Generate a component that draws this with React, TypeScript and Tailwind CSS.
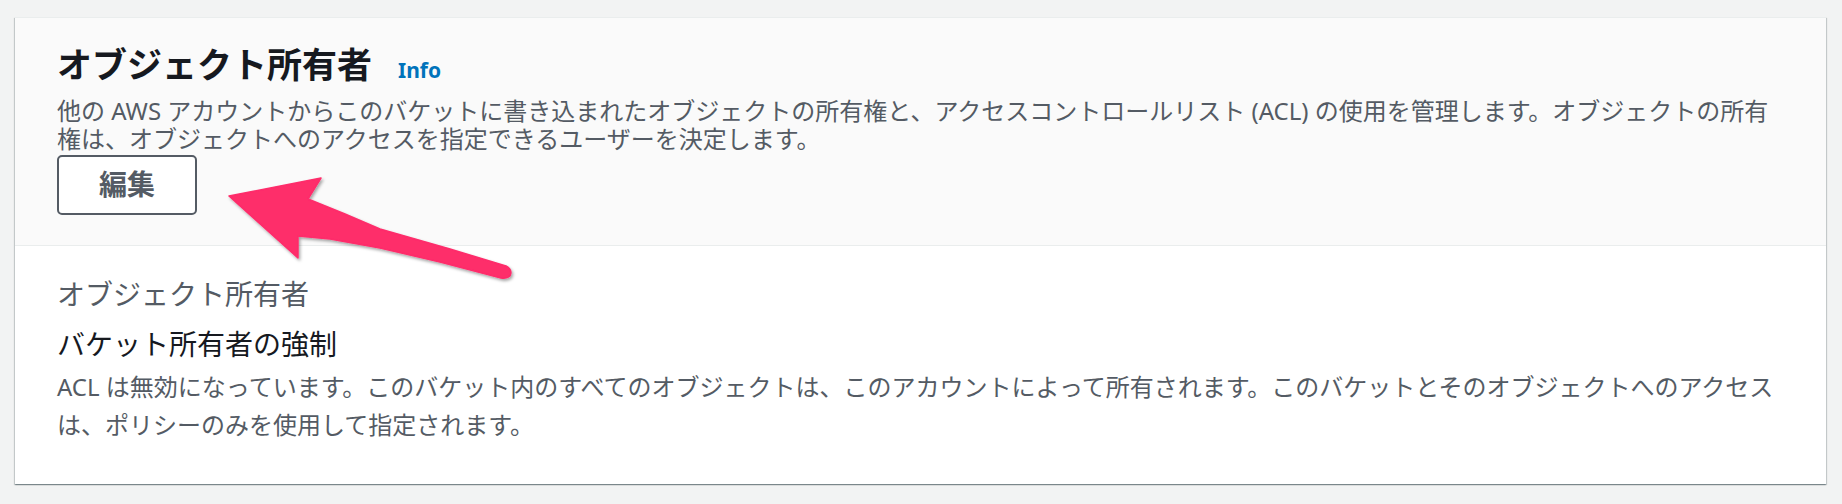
const font = "font-['Noto_Sans','Noto_Sans_CJK_JP',sans-serif]";

function Arrow() {
  return (
    <svg
      className="absolute left-0 top-0 pointer-events-none"
      width="1842"
      height="504"
      viewBox="0 0 1842 504"
    >
      <defs>
        <filter id="arrow-shadow" x="-20%" y="-20%" width="140%" height="140%">
          <feDropShadow dx="1.5" dy="2" stdDeviation="1.4" floodColor="#000" floodOpacity="0.35" />
        </filter>
      </defs>
      <path
        d="M229 196 L321 178 L308 199 L345 214 L380 229 L450 249 L506 266 Q513 270 510 276 Q507 279 501 278 L440 262 L380 248 L330 239 L298 236 L298 258 Z"
        fill="#fe2d6b"
        stroke="#fe2d6b"
        strokeWidth="1.5"
        strokeLinejoin="round"
        filter="url(#arrow-shadow)"
      />
    </svg>
  );
}

export default function App() {
  return (
    <div className={`relative min-h-[504px] bg-[#f2f3f3] pt-[17px] pl-[15px] pr-[16px] ${font}`}>
      <div className="bg-white border-t border-[#eaeded] shadow-[0_1px_1px_0_rgba(0,28,36,0.3),1px_1px_1px_0_rgba(0,28,36,0.15),-1px_1px_1px_0_rgba(0,28,36,0.15)]">
        {/* Header */}
        <div className="bg-[#fafafa] px-[42px] pt-[27px] pb-[30px] border-b border-[#eaeded]">
          <div className="flex items-baseline gap-[26px]">
            <h2 className="text-[35px] leading-[40px] font-bold text-[#16191f]">オブジェクト所有者</h2>
            <span className="text-[21px] leading-[40px] font-bold text-[#0073bb]">Info</span>
          </div>
          <p className="mt-[7px] text-[24px] leading-[28px] text-[#545b64]">
            他の AWS アカウントからこのバケットに書き込まれたオブジェクトの所有権と、アクセスコントロールリスト (ACL) の使用を管理します。オブジェクトの所有権は、オブジェクトへのアクセスを指定できるユーザーを決定します。
          </p>
          <button className="mt-[2px] flex h-[60px] w-[140px] items-center justify-center rounded-[5px] border-2 border-[#545b64] bg-white pb-[2px] text-[28px] font-bold text-[#545b64]">
            編集
          </button>
        </div>

        {/* Body */}
        <div className="px-[42px] pt-[32px] pb-[40px]">
          <div className="text-[28px] leading-[32px] text-[#545b64]">オブジェクト所有者</div>
          <div className="mt-[18px] text-[28px] leading-[32px] text-[#16191f]">バケット所有者の強制</div>
          <p className="mt-[8px] text-[24px] leading-[38px] text-[#545b64]">
            ACL は無効になっています。このバケット内のすべてのオブジェクトは、このアカウントによって所有されます。このバケットとそのオブジェクトへのアクセスは、ポリシーのみを使用して指定されます。
          </p>
        </div>
      </div>
      <Arrow />
    </div>
  );
}
